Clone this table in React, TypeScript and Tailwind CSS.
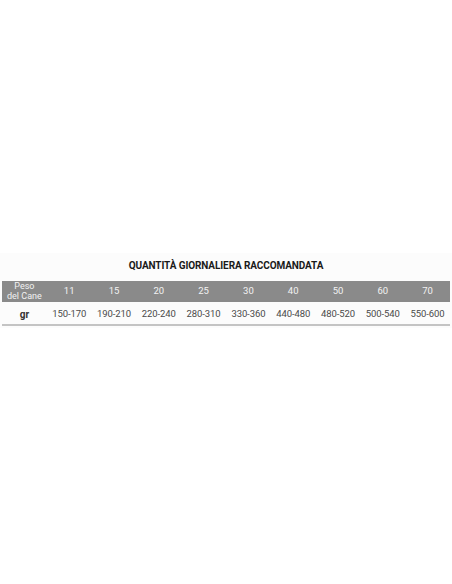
const weights = ["11", "15", "20", "25", "30", "40", "50", "60", "70"];
const grams = ["150-170", "190-210", "220-240", "280-310", "330-360", "440-480", "480-520", "500-540", "550-600"];

export default function App() {
  return (
    <div className="h-[584px] w-[452px] bg-white pt-[253px]" style={{ fontFamily: "Roboto, 'DejaVu Sans', sans-serif" }}>
      <div className="bg-[#fcfcfc] pl-[2px] pr-[2px] pt-[3px] pb-[2px]">
        <h2 className="text-center text-[10px] font-bold tracking-[-0.1px] text-[#1a1a1a] h-[25px] leading-[20px]">
          QUANTITÀ GIORNALIERA RACCOMANDATA
        </h2>
        <div className="grid grid-cols-10 bg-[#8a8a8a] h-[21px] items-center text-[#f2f2f2]">
          <div className="text-center text-[9px] leading-[9.5px]">Peso<br />del Cane</div>
          {weights.map((w) => (
            <div key={w} className="text-center text-[9.5px]">{w}</div>
          ))}
        </div>
        <div className="grid grid-cols-10 h-[24px] pt-[3px] items-center border-b-2 border-[#c4c4c4] text-[#4a4a4a]">
          <div className="text-center text-[10px] font-bold text-[#333]">gr</div>
          {grams.map((g) => (
            <div key={g} className="text-center text-[9.5px] tracking-[-0.1px]">{g}</div>
          ))}
        </div>
      </div>
    </div>
  );
}
